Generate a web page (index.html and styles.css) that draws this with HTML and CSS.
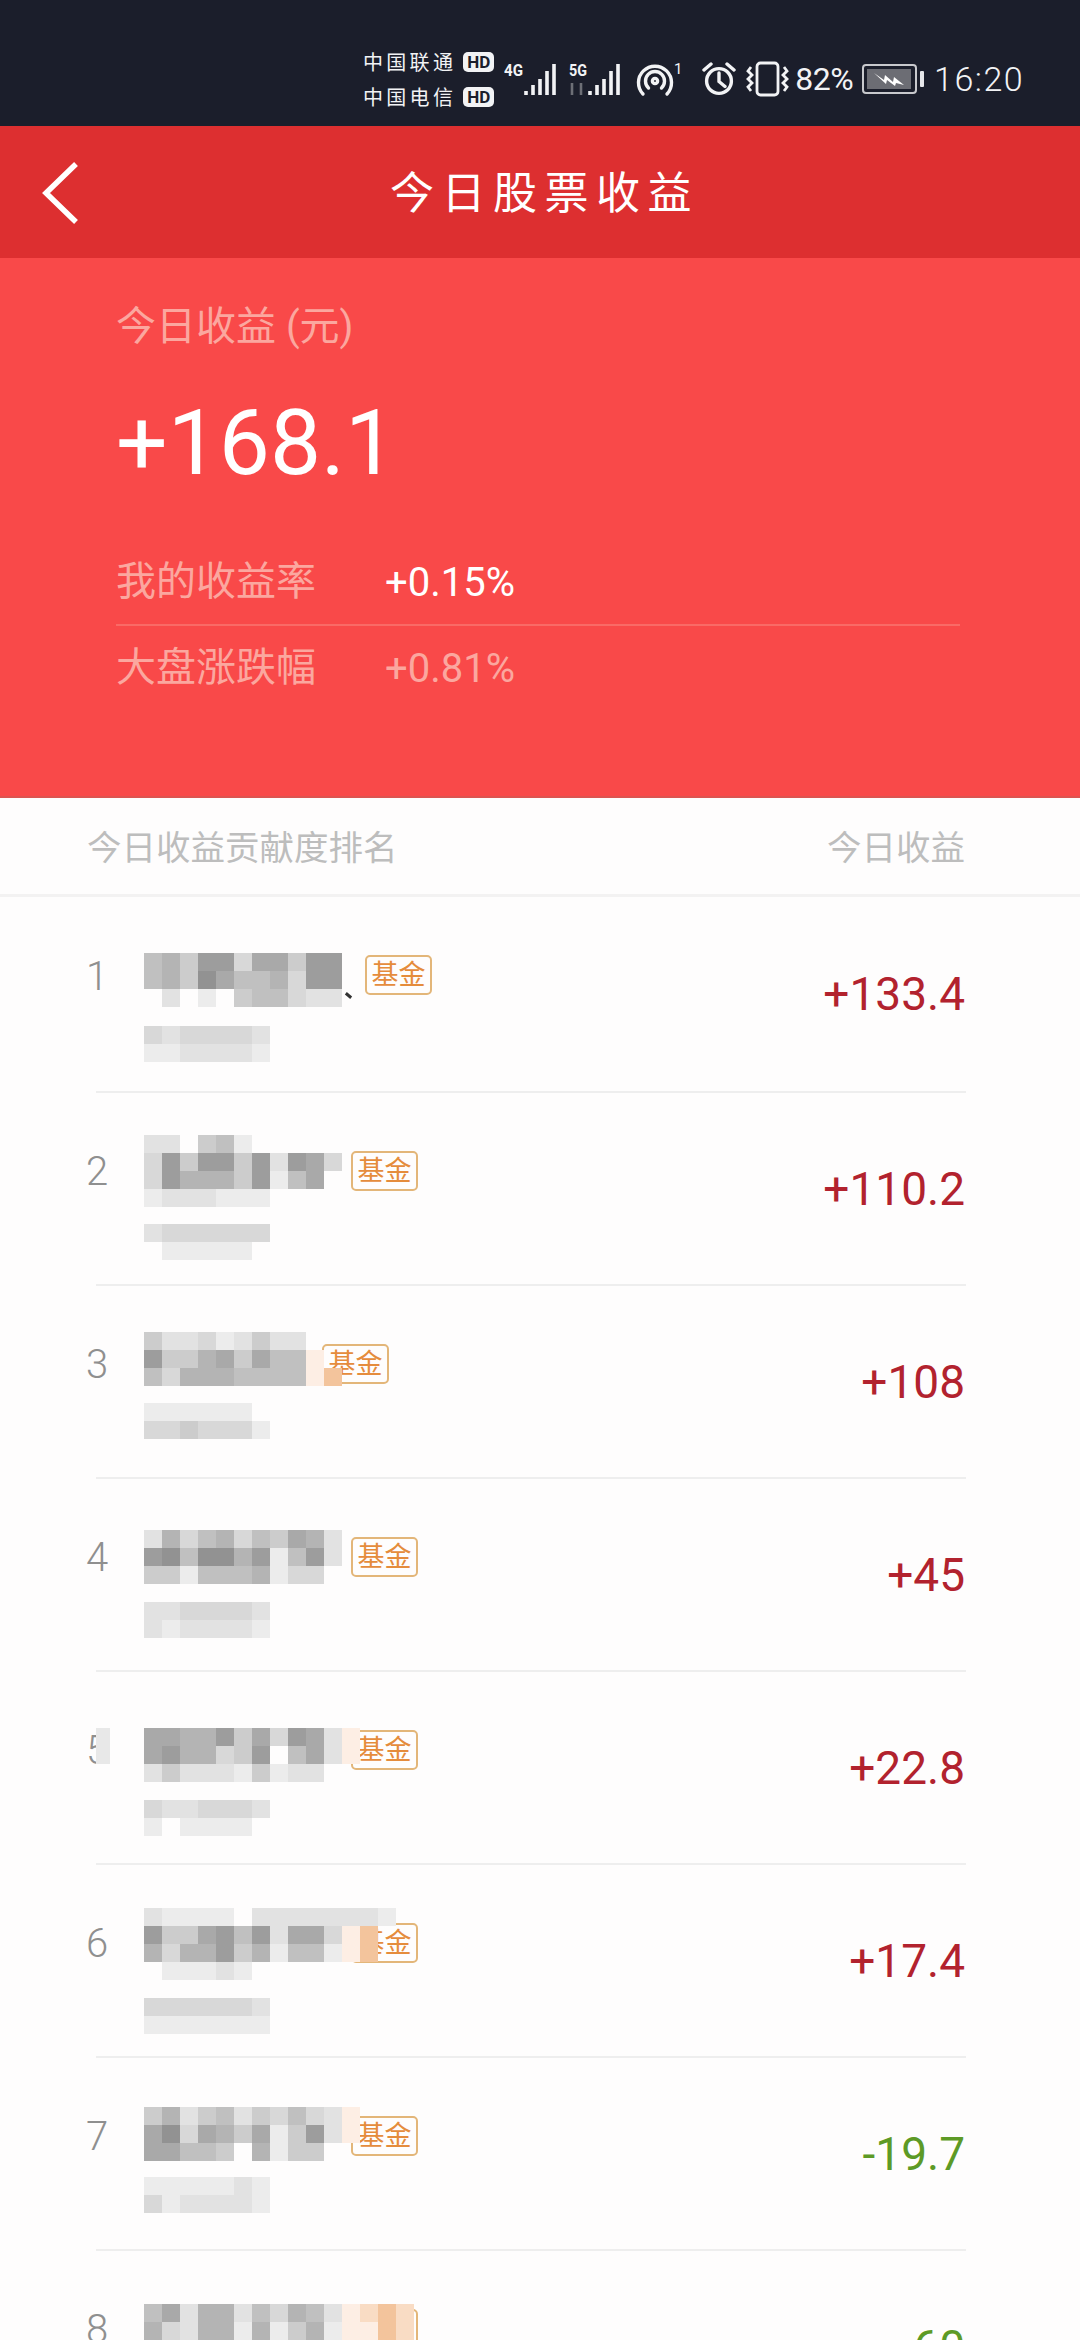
FILE: index.html
```html
<!DOCTYPE html>
<html lang="zh">
<head>
  <meta charset="utf-8">
  <title>今日股票收益</title>
  <link rel="stylesheet" href="styles.css">
</head>
<body>
  <div class="statusbar">
    <div class="carriers">
      <div class="carrier"><span>中国联通</span><b class="hd">HD</b></div>
      <div class="carrier"><span>中国电信</span><b class="hd">HD</b></div>
    </div>
    <svg class="signal" width="54" height="36" viewBox="0 0 54 36">
      <text x="0" y="15" class="net" textLength="19" lengthAdjust="spacingAndGlyphs">4G</text>
      <path d="M22 30v4M29 24v10M36 18v16M43 10v24M50 3v31" stroke="#f2f3f5" stroke-width="3.6" fill="none"/>
    </svg>
    <svg class="signal" width="54" height="36" viewBox="0 0 54 36">
      <text x="0" y="15" class="net" textLength="18" lengthAdjust="spacingAndGlyphs">5G</text>
      <path d="M3 34v-12M12 22v12" stroke="#6d6f76" stroke-width="2.6" fill="none"/>
      <path d="M21 30v4M28 24v10M35 18v16M42 10v24M49 3v31" stroke="#f2f3f5" stroke-width="3.6" fill="none"/>
    </svg>
    <svg class="hotspot" width="46" height="36" viewBox="0 0 46 36" fill="none" stroke="#f2f3f5" stroke-width="3.4" stroke-linecap="round">
      <path d="M7 33A16.5 16.5 0 1 1 31 33"/>
      <path d="M12.5 27A9.5 9.5 0 1 1 25.5 27"/>
      <circle cx="19" cy="20" r="2.6"/>
      <text x="38" y="13" class="tiny">1</text>
    </svg>
    <svg class="alarm" width="34" height="36" viewBox="0 0 34 36" fill="none" stroke="#f2f3f5" stroke-width="3.4">
      <circle cx="17" cy="20" r="12.4"/>
      <path d="M17 12v8.5l6 5M2 9l7-6M32 9l-7-6" stroke-linecap="round"/>
    </svg>
    <svg class="vibrate" width="44" height="36" viewBox="0 0 44 36" fill="none" stroke="#f2f3f5" stroke-width="2.8">
      <rect x="11" y="2" width="21" height="32" rx="3.5"/>
      <path d="M5 6l-3 4 4 4-4 4 4 4-4 4 3 4M38 6l3 4-4 4 4 4-4 4 4 4-3 4"/>
    </svg>
    <span class="batt-pct">82%</span>
    <div class="battery">
      <div class="battery-fill">
        <svg width="30" height="14" viewBox="0 0 30 14"><path d="M0 1l10 7 1-5 8 7 1-5 10 8-8-2-1 3-8-6-1 4z" fill="#fff"/></svg>
      </div>
    </div>
    <span class="battery-nub"></span>
    <span class="clock">16:20</span>
  </div>

  <header class="topbar">
    <svg class="back" width="38" height="62" viewBox="0 0 38 62" fill="none" stroke="#fff" stroke-width="5.5">
      <path d="M35 2L5 31l30 29"/>
    </svg>
    <h1>今日股票收益</h1>
  </header>

  <section class="hero">
    <div class="hero-label">今日收益 (元)</div>
    <div class="hero-total">+168.1</div>
    <div class="hero-line hero-first"><span class="hero-key">我的收益率</span><span class="hero-val">+0.15%</span></div>
    <div class="hero-line"><span class="hero-key">大盘涨跌幅</span><span class="hero-val dim">+0.81%</span></div>
  </section>

  <div class="list-head">
    <span>今日收益贡献度排名</span>
    <span>今日收益</span>
  </div>

  <main class="list">
    <div class="row first">
      <span class="rank">1</span>
      <div class="name name-long"></div>
      <span class="badge">基金</span>
      <span class="amount up">+133.4</span>
      <div class="mosaic" data-top="56" data-cells="56488377488|56497556388|02010455322"></div>
      <div class="mosaic" data-top="129" data-cells="3233332|1122221"></div>
      <i class="speck"></i>
    </div>
    <div class="row">
      <span class="rank">2</span>
      <div class="name"></div>
      <span class="badge">基金</span>
      <span class="amount up">+110.2</span>
      <div class="mosaic" data-top="42" data-cells="220451|38488482873|3866648157|1222111"></div>
      <div class="mosaic" data-top="131" data-cells="2333333|0111110"></div>
    </div>
    <div class="row">
      <span class="rank">3</span>
      <div class="name name-short"></div>
      <span class="badge">基金</span>
      <span class="amount up">+108</span>
      <div class="mosaic" data-top="46" data-cells="422312422|844674755r|536665555rq"></div>
      <div class="mosaic" data-top="117" data-cells="1111110|3343331"></div>
    </div>
    <div class="row">
      <span class="rank">4</span>
      <div class="name"></div>
      <span class="badge">基金</span>
      <span class="amount up">+45</span>
      <div class="mosaic" data-top="51" data-cells="26356354762|89599681582|44155561330"></div>
      <div class="mosaic" data-top="123" data-cells="2233332|2122221"></div>
    </div>
    <div class="row">
      <span class="rank">5<i class="rank-cover"></i></span>
      <div class="name"></div>
      <span class="badge">基金</span>
      <span class="amount up">+22.8</span>
      <div class="mosaic" data-top="56" data-cells="77668473872r|78663480572r|24222141220"></div>
      <div class="mosaic" data-top="128" data-cells="3223332|1011110"></div>
    </div>
    <div class="row">
      <span class="rank">6</span>
      <div class="name"></div>
      <span class="badge">基金</span>
      <span class="amount up">+17.4</span>
      <div class="mosaic" data-top="43" data-cells="21111022222221|84478582773rq|63668461551rq|0111210"></div>
      <div class="mosaic" data-top="133" data-cells="3333332|1111111"></div>
    </div>
    <div class="row">
      <span class="rank">7</span>
      <div class="name"></div>
      <span class="badge">基金</span>
      <span class="amount down">-19.7</span>
      <div class="mosaic" data-top="49" data-cells="46245243532r|79376471482r|7755406144"></div>
      <div class="mosaic" data-top="119" data-cells="1111121|3122221"></div>
    </div>
    <div class="row">
      <span class="rank">8</span>
      <div class="name"></div>
      <span class="badge">基金</span>
      <span class="amount down">-60</span>
      <div class="mosaic" data-top="53" data-cells="57266253652rpqp|63266161461rrqp"></div>
    </div>
  </main>

  <script src="script.js"></script>
</body>
</html>
```

FILE: styles.css
```css
html, body {
  margin: 0;
  height: 2340px;
  overflow: hidden;
}

body {
  font-family: Roboto, "Noto Sans CJK SC", sans-serif;
  background-color: #fefdfd;
}

/* status bar */
.statusbar {
  display: flex;
  align-items: center;
  height: 126px;
  padding: 32px 0 0 363px;
  box-sizing: border-box;
  background-color: #1b1e2b;
  color: #f2f3f5;
}

.carriers {
  display: flex;
  flex-direction: column;
  gap: 13px;
  margin-right: 10px;
}

.carrier {
  display: flex;
  align-items: center;
  gap: 7px;
  height: 22px;
  font-size: 20px;
  letter-spacing: 3.3px;
}

.hd {
  width: 31px;
  height: 20px;
  line-height: 20px;
  border-radius: 5px;
  background-color: #f2f3f5;
  color: #1b1e2b;
  font-size: 17px;
  font-weight: 700;
  letter-spacing: 0;
  text-align: center;
}

.net {
  font-size: 17px;
  font-weight: 700;
  fill: #f2f3f5;
}

.tiny {
  font-size: 15px;
  fill: #f2f3f5;
  stroke: none;
}

.signal { margin-right: 11px; }
.hotspot { margin-right: 20px; margin-left: 2px; }
.alarm { margin-right: 10px; }
.vibrate { margin-right: 5px; }

.batt-pct {
  font-size: 32px;
  margin-right: 9px;
  letter-spacing: -0.5px;
}

.battery {
  display: flex;
  width: 55px;
  height: 30px;
  padding: 3px;
  box-sizing: border-box;
  border: 2px solid #c8c9cd;
  border-radius: 4px;
}

.battery-fill {
  display: flex;
  align-items: center;
  justify-content: center;
  width: 44px;
  background-color: #6c6d74;
}

.battery-nub {
  width: 4px;
  height: 16px;
  margin: 0 10px 0 3px;
  border-radius: 1px;
  background-color: #e6e7ea;
}

.clock {
  font-size: 34px;
  letter-spacing: 1.5px;
  font-weight: 300;
}

/* title bar */
.topbar {
  position: relative;
  height: 132px;
  background-color: #dd2f30;
  display: flex;
  align-items: center;
  justify-content: center;
}

.topbar h1 {
  margin: 0 0 4px 9px;
  font-size: 44px;
  font-weight: 400;
  letter-spacing: 7.5px;
  color: #fff;
}

.back {
  position: absolute;
  left: 41px;
  top: 36px;
}

/* summary */
.hero {
  height: 540px;
  box-sizing: border-box;
  padding: 42px 120px 0 116px;
  background-color: #f94949;
  border-bottom: 2px solid #dc5450;
  color: #fba79f;
}

.hero-label {
  font-size: 40px;
  line-height: 54px;
}

.hero-total {
  margin-top: 36px;
  font-size: 91px;
  line-height: 106px;
  color: #fff;
}

.hero-line {
  display: flex;
  align-items: center;
  height: 84px;
  font-size: 40px;
}

.hero-first {
  margin-top: 44px;
  border-bottom: 2px solid #fa6a66;
}

.hero-key {
  width: 269px;
  margin-bottom: 8px;
}

.hero-val {
  color: #fff;
}

.hero-val.dim {
  color: #fba79f;
}

/* list */
.list-head {
  display: flex;
  justify-content: space-between;
  align-items: center;
  height: 99px;
  box-sizing: border-box;
  padding: 0 115px 2px 87px;
  border-bottom: 3px solid #f3f2f2;
  font-size: 34.5px;
  color: #bdbdbd;
}

.row {
  position: relative;
  display: flex;
  align-items: flex-start;
  height: 193px;
  box-sizing: border-box;
  margin: 0 114px 0 96px;
  border-bottom: 2px solid #eeeeee;
}

.row.first {
  height: 196px;
}

.rank {
  position: relative;
  width: 58px;
  margin: 56px 0 0 -10px;
  font-size: 40px;
  line-height: 46px;
  font-weight: 300;
  color: #8f8f8f;
}

.first .rank {
  margin-top: 57px;
}

.rank-cover {
  position: absolute;
  left: 10px;
  top: 0;
  width: 14px;
  height: 36px;
  background-color: #e8e8e8;
}

.name {
  width: 207px;
}

.name-long {
  width: 221px;
}

.name-short {
  width: 178px;
}

.badge {
  width: 67px;
  height: 40px;
  margin-top: 58px;
  box-sizing: border-box;
  border: 2px solid #e3b679;
  border-radius: 5px;
  font-size: 27px;
  line-height: 37px;
  text-align: center;
  color: #e58c3c;
}

.amount {
  margin: auto 1px auto auto;
  font-size: 46px;
  line-height: 52px;
}

.up { color: #b2222e; }
.down { color: #5d9a26; }

/* blurred-out fund names, laid over the row */
.mosaic {
  position: absolute;
  left: 48px;
  display: flex;
  flex-direction: column;
  filter: blur(0.7px);
}

.mosaic-line {
  display: flex;
  height: 18px;
}

.mosaic-line i {
  width: 18px;
}

.speck {
  position: absolute;
  left: 249px;
  top: 97px;
  width: 7px;
  height: 3px;
  background-color: #333;
  transform: rotate(40deg);
}

.g0 { background-color: transparent; }
.g1 { background-color: #ececec; }
.g2 { background-color: #e2e2e2; }
.g3 { background-color: #d8d8d8; }
.g4 { background-color: #cccccc; }
.g5 { background-color: #c0c0c0; }
.g6 { background-color: #b4b4b4; }
.g7 { background-color: #a9a9a9; }
.g8 { background-color: #9d9d9d; }
.g9 { background-color: #929292; }
.gr { background-color: #fdeee4; }
.gp { background-color: #f9dcc4; }
.gq { background-color: #f3c49c; }
```

FILE: script.js
```js
// each name is hidden by a mosaic: lines split by |, one character per 18px cell
document.querySelectorAll('.mosaic').forEach((mosaic) => {
  mosaic.style.top = mosaic.dataset.top + 'px';
  mosaic.dataset.cells.split('|').forEach((line) => {
    const lineEl = document.createElement('div');
    lineEl.className = 'mosaic-line';
    for (const shade of line) {
      const cell = document.createElement('i');
      cell.className = 'g' + shade;
      lineEl.appendChild(cell);
    }
    mosaic.appendChild(lineEl);
  });
});
```
